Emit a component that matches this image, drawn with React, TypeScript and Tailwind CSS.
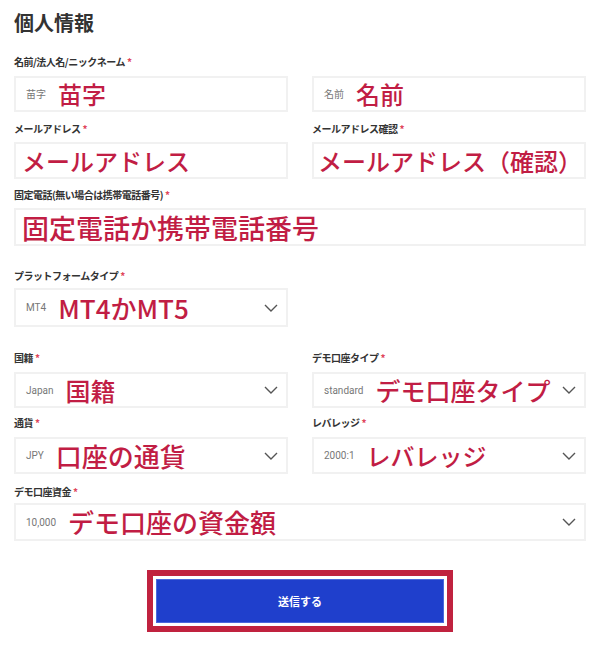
import React from "react";

const JP = { fontFamily: '"Noto Sans CJK JP", "Noto Sans", sans-serif' };

function Label({ text, className = "" }: { text: string; className?: string }) {
  return (
    <div className={`h-[14px] text-[10px] leading-[14px] font-bold text-[#333] tracking-[-0.5px] ${className}`}>
      {text}
      <span className="text-[#e0455a] ml-[2px]">*</span>
    </div>
  );
}

function Chevron() {
  return (
    <svg width="14" height="8" viewBox="0 0 14 8" className="shrink-0">
      <path d="M1 1 L7 7 L13 1" fill="none" stroke="#555" strokeWidth="1.4" />
    </svg>
  );
}

function Box({
  small,
  big,
  size = 24,
  select = false,
  h = "h-[36px]",
  mt = "mt-[7px]",
  pl = "pl-[10px]",
}: {
  small?: string;
  big: string;
  size?: number;
  select?: boolean;
  h?: string;
  mt?: string;
  pl?: string;
}) {
  const sizeCls =
    size === 27
      ? "text-[27px]"
      : size === 26
      ? "text-[26px]"
      : size === 25
      ? "text-[25px]"
      : "text-[24px]";
  return (
    <div
      className={`${h} ${mt} ${pl} pr-[8px] border-2 border-[#f1f1f1] bg-white flex items-center gap-[12px] overflow-hidden`}
    >
      {small && (
        <span className="text-[10px] text-[#777] whitespace-nowrap shrink-0" style={{ fontFamily: '"Roboto", "Noto Sans CJK JP", sans-serif' }}>
          {small}
        </span>
      )}
      <span className={`${sizeCls} leading-none font-medium text-[#c11d44] whitespace-nowrap flex-1`}>
        {big}
      </span>
      {select && <Chevron />}
    </div>
  );
}

export default function App() {
  return (
    <div className="w-[600px] h-[648px] bg-white px-[14px] pt-[9px]" style={JP}>
      <div className="h-[28px] text-[20px] leading-[28px] font-bold text-[#333]">個人情報</div>

      <div className="grid grid-cols-2 gap-x-[24px] mt-[18px]">
        <div>
          <Label text="名前/法人名/ニックネーム" />
          <Box small="苗字" big="苗字" pl="pl-[10px]" />
        </div>
        <div>
          <div className="h-[14px]" />
          <Box small="名前" big="名前" />
        </div>
      </div>

      <div className="grid grid-cols-2 gap-x-[24px] mt-[10px]">
        <div>
          <Label text="メールアドレス" />
          <Box big="メールアドレス" h="h-[37px]" mt="mt-[6px]" pl="pl-[6px]" />
        </div>
        <div>
          <Label text="メールアドレス確認" />
          <Box big="メールアドレス（確認）" h="h-[37px]" mt="mt-[6px]" pl="pl-[4px]" />
        </div>
      </div>

      <div className="mt-[9px]">
        <Label text="固定電話(無い場合は携帯電話番号)" />
        <Box big="固定電話か携帯電話番号" size={27} h="h-[38px]" mt="mt-[6px]" pl="pl-[6px]" />
      </div>

      <div className="grid grid-cols-2 gap-x-[24px] mt-[23px]">
        <div>
          <Label text="プラットフォームタイプ" />
          <Box small="MT4" big="MT4かMT5" size={26} select h="h-[39px]" mt="mt-[5px]" />
        </div>
        <div />
      </div>

      <div className="grid grid-cols-2 gap-x-[24px] mt-[24px]">
        <div>
          <Label text="国籍" />
          <Box small="Japan" big="国籍" size={25} select mt="mt-[7px]" />
        </div>
        <div>
          <Label text="デモ口座タイプ" />
          <Box small="standard" big="デモ口座タイプ" size={25} select mt="mt-[7px]" />
        </div>
      </div>

      <div className="grid grid-cols-2 gap-x-[24px] mt-[8px]">
        <div>
          <Label text="通貨" />
          <Box small="JPY" big="口座の通貨" size={26} select h="h-[37px]" mt="mt-[7px]" />
        </div>
        <div>
          <Label text="レバレッジ" />
          <Box small="2000:1" big="レバレッジ" size={24} select h="h-[37px]" mt="mt-[7px]" />
        </div>
      </div>

      <div className="mt-[11px]">
        <Label text="デモ口座資金" />
        <Box small="10,000" big="デモ口座の資金額" size={26} select h="h-[38px]" mt="mt-[4px]" />
      </div>

      <div className="flex justify-center mt-[29px]">
        <div className="w-[306px] h-[62px] border-[6px] border-[#c0223f] p-[3px]">
          <button className="w-full h-full bg-[#1f3fcc] border border-[#4a68dc] text-white text-[11px] font-bold">
            送信する
          </button>
        </div>
      </div>
    </div>
  );
}
